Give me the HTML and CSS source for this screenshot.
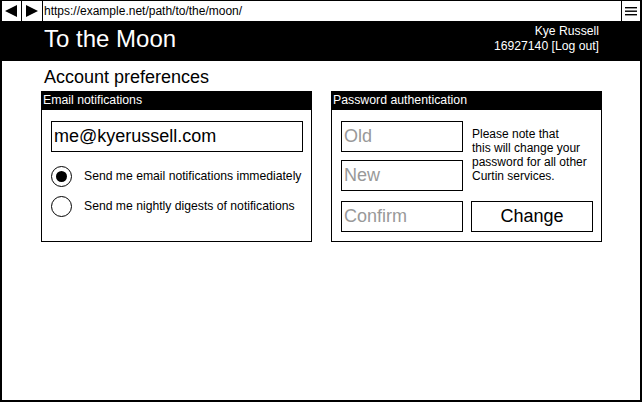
FILE: index.html
```html
<!DOCTYPE html>
<html>
<head>
<meta charset="utf-8">
<link rel="stylesheet" href="styles.css">
</head>
<body>
<div class="window">
  <div class="toolbar">
    <div class="nav-btn"><svg width="14" height="14" viewBox="0 0 14 14"><polygon points="1,7 13,1 13,13" fill="#000"/></svg></div>
    <div class="nav-btn"><svg width="14" height="14" viewBox="0 0 14 14"><polygon points="13,7 1,1 1,13" fill="#000"/></svg></div>
    <div class="url">https://example.net/path/to/the/moon/</div>
    <div class="menu-btn"><svg width="12" height="10" viewBox="0 0 12 10"><rect x="0" y="1" width="12" height="1.4" fill="#000"/><rect x="0" y="4.5" width="12" height="1.4" fill="#000"/><rect x="0" y="8" width="12" height="1.4" fill="#000"/></svg></div>
  </div>
  <div class="header">
    <div class="title">To the Moon</div>
    <div class="user">
      <div>Kye Russell</div>
      <div>16927140 [Log out]</div>
    </div>
  </div>
  <div class="content">
    <h1 class="page-title">Account preferences</h1>
    <div class="panels">
      <div class="panel">
        <div class="panel-head">Email notifications</div>
        <div class="panel-body email-body">
          <div class="field email-field">me@kyerussell.com</div>
          <div class="radio-row"><span class="radio checked"></span><span>Send me email notifications immediately</span></div>
          <div class="radio-row"><span class="radio"></span><span>Send me nightly digests of notifications</span></div>
        </div>
      </div>
      <div class="panel">
        <div class="panel-head">Password authentication</div>
        <div class="panel-body pw-body">
          <div class="field placeholder">Old</div>
          <div class="note">Please note that<br>this will change your<br>password for all other<br>Curtin services.</div>
          <div class="field placeholder">New</div>
          <div class="field placeholder">Confirm</div>
          <div class="button">Change</div>
        </div>
      </div>
    </div>
  </div>
</div>
</body>
</html>
```

FILE: styles.css
```css
* { box-sizing: border-box; }
html, body { margin: 0; padding: 0; background: #fff; }
body { font-family: "Liberation Sans", Arial, sans-serif; color: #000; }

.window {
  width: 642px;
  height: 402px;
  border-left: 2px solid #000;
  border-right: 2px solid #000;
  border-bottom: 2px solid #000;
  display: flex;
  flex-direction: column;
}

.toolbar {
  display: flex;
  height: 21px;
  border-top: 1px solid #000;
  margin-left: -1px;
}
.nav-btn, .menu-btn {
  width: 21px;
  height: 20px;
  border-right: 1px solid #000;
  display: flex;
  align-items: center;
  justify-content: center;
}
.menu-btn { border-right: none; border-left: 1px solid #000; width: 19px; }
.url {
  flex: 1;
  font-size: 12px;
  line-height: 20px;
  padding-left: 1px;
}

.header {
  background: #000;
  color: #fff;
  height: 40px;
  display: flex;
  justify-content: space-between;
  padding: 0 41px 0 42px;
}
.title { font-size: 24px; line-height: 36px; padding-top: 0; }
.user { text-align: right; font-size: 12.2px; line-height: 15px; padding-top: 3px; }

.content { padding: 5px 0 0 39px; }
.page-title {
  margin: 0 0 3px 3px;
  font-size: 18px;
  font-weight: normal;
  line-height: 22px;
}
.panels { display: flex; gap: 19px; }
.panel {
  width: 271px;
  height: 151px;
  border: 1px solid #000;
}
.panel-head {
  background: #000;
  color: #fff;
  font-size: 12.3px;
  line-height: 18px;
  height: 19px;
  padding-left: 2px;
  margin: -1px -1px 0 -1px;
}
.panel-body { padding: 11px 9px 0 9px; }

.field {
  border: 1px solid #000;
  height: 31px;
  font-size: 18px;
  line-height: 29px;
  padding-left: 2px;
}
.email-field { width: 252px; margin-bottom: 9px; }
.placeholder { color: #999; }

.radio-row {
  display: flex;
  align-items: center;
  font-size: 12.2px;
  height: 30px;
}
.radio {
  width: 21px;
  height: 21px;
  border: 1px solid #000;
  border-radius: 50%;
  margin-right: 12px;
  display: flex;
  align-items: center;
  justify-content: center;
}
.radio.checked::after {
  content: "";
  width: 11px;
  height: 11px;
  border-radius: 50%;
  background: #000;
}

.pw-body {
  display: grid;
  grid-template-columns: 122px 122px;
  grid-template-rows: 39px 41px 31px;
  column-gap: 8px;
  align-items: start;
}
.pw-body .field { width: 122px; }
.note {
  grid-column: 2;
  grid-row: 1 / span 2;
  font-size: 12px;
  line-height: 14px;
  padding: 6px 0 0 1px;
}
.button {
  border: 1px solid #000;
  height: 31px;
  font-size: 18px;
  line-height: 29px;
  text-align: center;
}
```
